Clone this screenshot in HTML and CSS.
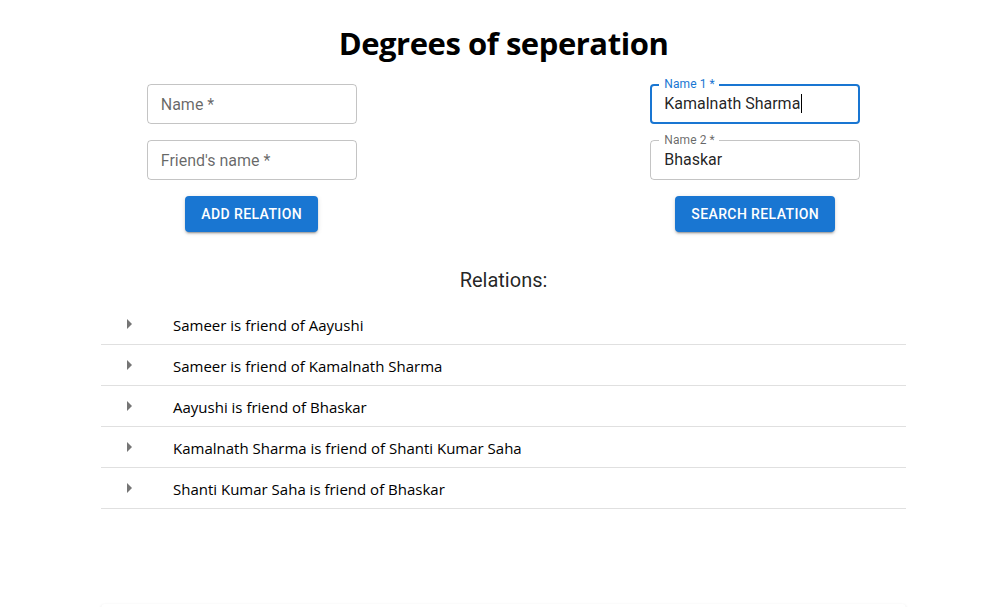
FILE: index.html
```html
<!DOCTYPE html>
<html lang="en">
<head>
<meta charset="utf-8">
<title>Degrees of seperation</title>
<link rel="stylesheet" href="styles.css">
</head>
<body>
<div class="app">
  <h1 class="title">Degrees of seperation</h1>
  <div class="forms">
    <div class="form-col">
      <div class="field">
        <input class="field-input" type="text" placeholder="Name *">
        <fieldset class="field-outline"><legend class="legend-empty"></legend></fieldset>
      </div>
      <div class="field">
        <input class="field-input" type="text" placeholder="Friend's name *">
        <fieldset class="field-outline"><legend class="legend-empty"></legend></fieldset>
      </div>
      <button class="btn" type="button">Add relation</button>
    </div>
    <div class="form-col">
      <div class="field field-focused">
        <label class="field-label">Name 1 *</label>
        <div class="field-value">Kamalnath Sharma<span class="caret"></span></div>
        <fieldset class="field-outline"><legend class="legend-notch"><span>Name 1 *</span></legend></fieldset>
      </div>
      <div class="field">
        <label class="field-label">Name 2 *</label>
        <div class="field-value">Bhaskar</div>
        <fieldset class="field-outline"><legend class="legend-notch"><span>Name 2 *</span></legend></fieldset>
      </div>
      <button class="btn" type="button">Search relation</button>
    </div>
  </div>

  <h2 class="relations-title">Relations:</h2>
  <ul class="relations">
    <li class="relation"><span class="relation-icon"><svg viewBox="0 0 24 24" width="24" height="24"><path d="M10 17l5-5-5-5v10z"/></svg></span><span class="relation-text">Sameer is friend of Aayushi</span></li>
    <li class="relation"><span class="relation-icon"><svg viewBox="0 0 24 24" width="24" height="24"><path d="M10 17l5-5-5-5v10z"/></svg></span><span class="relation-text">Sameer is friend of Kamalnath Sharma</span></li>
    <li class="relation"><span class="relation-icon"><svg viewBox="0 0 24 24" width="24" height="24"><path d="M10 17l5-5-5-5v10z"/></svg></span><span class="relation-text">Aayushi is friend of Bhaskar</span></li>
    <li class="relation"><span class="relation-icon"><svg viewBox="0 0 24 24" width="24" height="24"><path d="M10 17l5-5-5-5v10z"/></svg></span><span class="relation-text">Kamalnath Sharma is friend of Shanti Kumar Saha</span></li>
    <li class="relation"><span class="relation-icon"><svg viewBox="0 0 24 24" width="24" height="24"><path d="M10 17l5-5-5-5v10z"/></svg></span><span class="relation-text">Shanti Kumar Saha is friend of Bhaskar</span></li>
  </ul>

  <div class="result-card"></div>
</div>
</body>
</html>
```

FILE: styles.css
```css
* { box-sizing: border-box; }

html, body {
  margin: 0;
  padding: 0;
  background: #ffffff;
}

body {
  font-family: Roboto, "Liberation Sans", sans-serif;
  color: rgba(0, 0, 0, 0.87);
}

.app {
  display: flex;
  flex-direction: column;
  align-items: center;
  padding-top: 23px;
}

.title {
  margin: 0;
  font-family: "Open Sans", "Noto Sans", sans-serif;
  font-weight: 700;
  font-size: 31px;
  line-height: 40px;
  color: #000;
  letter-spacing: -0.45px;
}

.forms {
  width: 100%;
  display: grid;
  grid-template-columns: 1fr 1fr;
  margin-top: 21px;
}

.form-col {
  display: flex;
  flex-direction: column;
  align-items: center;
  gap: 16px;
}

.field {
  position: relative;
  width: 210px;
  height: 40px;
}

.field-input,
.field-value {
  width: 100%;
  height: 40px;
  border: 0;
  outline: 0;
  background: transparent;
  padding: 0 14px;
  font-family: Roboto, "Liberation Sans", sans-serif;
  font-size: 16px;
  color: rgba(0, 0, 0, 0.87);
  line-height: 40px;
  margin: 0;
  display: block;
}

.field-input {
  padding-top: 1px;
  line-height: normal;
}

.field-input::placeholder {
  color: rgba(0, 0, 0, 0.6);
  opacity: 1;
}

.caret {
  display: inline-block;
  width: 1px;
  height: 19px;
  background: #000;
  vertical-align: -4px;
  margin-left: 1px;
}

.field-outline {
  position: absolute;
  top: -5px;
  left: 0;
  right: 0;
  bottom: 0;
  margin: 0;
  padding: 0 8px;
  border: 1px solid rgba(0, 0, 0, 0.23);
  border-radius: 4px;
  pointer-events: none;
  min-width: 0;
}

.field-focused .field-outline {
  border: 2px solid #1976d2;
  padding: 0 7px;
}

.legend-empty {
  padding: 0;
  width: 0;
  height: 11px;
  font-size: 12px;
  line-height: 11px;
}

.legend-notch {
  height: 11px;
  font-size: 12px;
  line-height: 11px;
  padding: 0;
  visibility: hidden;
}

.legend-notch span {
  padding: 0 5px;
  display: inline-block;
}

.field-label {
  position: absolute;
  left: 14px;
  top: -7px;
  font-size: 12px;
  line-height: 14px;
  color: rgba(0, 0, 0, 0.6);
  letter-spacing: 0.1px;
}

.field-focused .field-label {
  color: #1976d2;
}

.btn {
  margin: 0;
  border: 0;
  border-radius: 4px;
  background: #1976d2;
  color: #fff;
  font-family: Roboto, "Liberation Sans", sans-serif;
  font-weight: 500;
  font-size: 14px;
  line-height: 24px;
  letter-spacing: 0.4px;
  text-transform: uppercase;
  padding: 6px 16px;
  height: 36px;
  box-shadow: 0 3px 1px -2px rgba(0,0,0,0.2), 0 2px 2px 0 rgba(0,0,0,0.14), 0 1px 5px 0 rgba(0,0,0,0.12);
}

.relations-title {
  margin: 32px 0 0;
  font-family: Roboto, "Liberation Sans", sans-serif;
  font-weight: 400;
  font-size: 20px;
  line-height: 32px;
  color: rgba(0, 0, 0, 0.87);
}

.relations {
  list-style: none;
  margin: 8px 0 0;
  padding: 0;
  width: 805px;
}

.relation {
  display: flex;
  align-items: center;
  height: 41px;
  border-bottom: 1px solid rgba(0, 0, 0, 0.12);
}

.relation-icon {
  display: flex;
  width: 24px;
  height: 24px;
  margin-left: 16px;
  margin-right: 32px;
  margin-top: -1px;
}

.relation-icon svg {
  fill: #757575;
}

.relation-text {
  font-family: "Open Sans", "Noto Sans", sans-serif;
  font-size: 15px;
  color: #000;
  letter-spacing: 0;
  padding-top: 2px;
}

.result-card {
  width: 805px;
  height: 40px;
  margin-top: 95px;
  border-radius: 4px;
  background: #fff;
  box-shadow: 0 2px 1px -1px rgba(0,0,0,0.2), 0 1px 1px 0 rgba(0,0,0,0.14), 0 1px 3px 0 rgba(0,0,0,0.12);
}
```
